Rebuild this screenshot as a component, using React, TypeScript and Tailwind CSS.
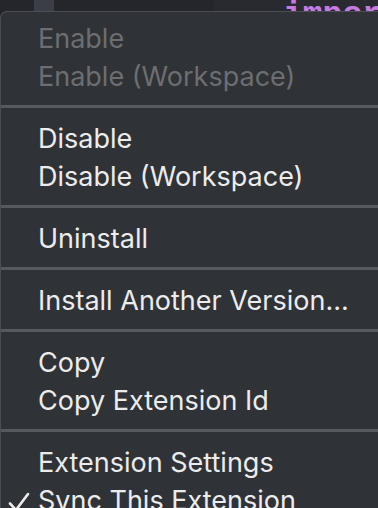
import React from "react";

type Item = { label: string; disabled?: boolean; checked?: boolean };

const groups: Item[][] = [
  [{ label: "Enable", disabled: true }, { label: "Enable (Workspace)", disabled: true }],
  [{ label: "Disable" }, { label: "Disable (Workspace)" }],
  [{ label: "Uninstall" }],
  [{ label: "Install Another Version..." }],
  [{ label: "Copy" }, { label: "Copy Extension Id" }],
  [{ label: "Extension Settings" }, { label: "Sync This Extension", checked: true }],
];

function MenuRow({ item }: { item: Item }) {
  const color = item.disabled ? "text-[#6c6e71]" : "text-[#ececec]";
  return (
    <div className={`relative flex h-[38px] items-center pl-[37px] text-[27px] leading-none ${color}`}>
      {item.checked && (
        <svg className="absolute left-[7px] top-[10px]" width="22" height="22" viewBox="0 0 22 22">
          <path d="M2 12.5 L8 19 L20 3" fill="none" stroke="#ececec" strokeWidth="2.6" strokeLinecap="round" strokeLinejoin="round" />
        </svg>
      )}
      <span className="whitespace-nowrap">{item.label}</span>
    </div>
  );
}

export default function App() {
  return (
    <div
      className="relative h-[508px] w-[378px] overflow-hidden bg-[#25262b]"
      style={{ fontFamily: "Inter, 'Noto Sans', sans-serif" }}
    >
      {/* editor behind the menu */}
      <div className="relative flex h-[11px] overflow-hidden">
        <div className="w-[34px]" />
        <div className="w-[20px] bg-[#3b3e46]" />
        <div className="w-[160px]" />
        <div className="flex-1 bg-[#282a30]" />
        <div className="absolute left-[283px] top-[-9px] font-['Liberation_Mono',monospace] text-[33px] font-bold text-[#c77be0]">
          import
        </div>
      </div>
      {/* context menu */}
      <div className="-mr-4 h-[600px] rounded-tl-[7px] border-l border-t border-[#4b4e53] bg-[#2f3236] pt-[7px]">
        {groups.map((g, gi) => (
          <div key={gi}>
            {gi > 0 && (
              <div className="pb-[11px] pt-[10px]">
                <div className="h-[3px] bg-[#56595d]" />
              </div>
            )}
            {g.map((it) => (
              <MenuRow key={it.label} item={it} />
            ))}
          </div>
        ))}
      </div>
    </div>
  );
}
